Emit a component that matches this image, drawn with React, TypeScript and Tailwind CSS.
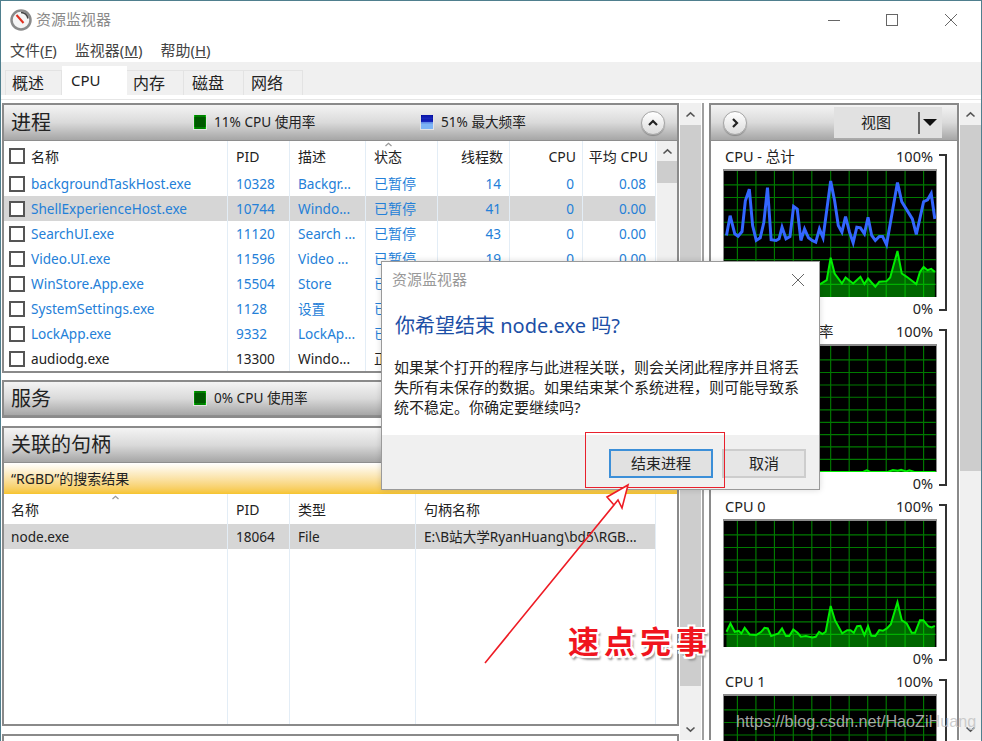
import type { ReactNode } from 'react'

const blueLine = [[135,705],[146,645],[160,700],[170,707],[182,693],[192,600],[204,565],[214,675],[225,720],[237,712],[248,665],[259,560],[270,718],[285,720],[294,715],[303,680],[315,715],[327,708],[338,617],[349,625],[360,720],[371,685],[383,712],[394,720],[405,725],[416,685],[427,712],[450,540],[462,600],[473,675],[484,695],[495,648],[507,695],[518,727],[529,680],[540,682],[552,700],[563,650],[574,705],[585,720],[597,708],[607,708],[619,733],[652,545],[665,603],[697,655],[709,702],[731,603],[743,597],[754,578],[765,655]]
const totalGreen = [[128,850],[300,850],[417,853],[438,840],[450,772],[462,820],[484,850],[495,832],[518,850],[540,830],[552,852],[563,835],[585,860],[597,845],[619,843],[630,832],[652,752],[665,820],[680,830],[709,852],[720,815],[731,800],[743,810],[754,806],[765,815]]
const serviceGreen = [[0,381],[420,381],[431,376],[442,381],[495,381],[510,375],[525,377],[535,374],[550,379],[560,376],[575,381],[640,381]]
const cpu0Green = [[75,455],[87,430],[100,455],[112,452],[120,460],[130,443],[145,463],[165,465],[180,455],[190,443],[200,445],[210,468],[232,460],[243,445],[255,468],[265,468],[277,448],[290,458],[300,470],[315,468],[335,472],[345,470],[355,455],[365,462],[375,455],[390,377],[403,420],[425,460],[440,450],[450,450],[460,458],[470,438],[480,437],[492,465],[503,438],[513,467],[525,468],[537,450],[548,452],[560,445],[572,432],[592,365],[605,420],[620,430],[635,458],[645,458],[660,420],[670,420],[685,438],[695,442],[705,437]]

const processes = [
  ['backgroundTaskHost.exe', '10328', 'Backgr...', '已暂停', '14', '0', '0.08'],
  ['ShellExperienceHost.exe', '10744', 'Windo...', '已暂停', '41', '0', '0.00'],
  ['SearchUI.exe', '11120', 'Search ...', '已暂停', '43', '0', '0.00'],
  ['Video.UI.exe', '11596', 'Video ...', '已暂停', '19', '0', '0.00'],
  ['WinStore.App.exe', '15504', 'Store', '已暂停', '', '', ''],
  ['SystemSettings.exe', '1128', '设置', '已暂停', '', '', ''],
  ['LockApp.exe', '9332', 'LockAp...', '已暂停', '', '', ''],
  ['audiodg.exe', '13300', 'Windo...', '正在运行', '', '', ''],
]

const charts = [
  { label: 'CPU - 总计', ox: 128, oy: 510, blue: blueLine, green: totalGreen },
  { label: '服务 CPU 使用率', ox: 0, oy: 0, blue: null, green: serviceGreen },
  { label: 'CPU 0', ox: 68, oy: 120, blue: null, green: cpu0Green },
  { label: 'CPU 1', ox: 0, oy: 0, blue: null, green: [[0,381],[640,381]] },
]

function Chevron({ up = true, className = '' }: { up?: boolean; className?: string }) {
  return (
    <svg width="11" height="7" viewBox="0 0 11 7" className={className}>
      <path d={up ? 'M1.5 5.5 5.5 1.8l4 3.7' : 'M1.5 1.5l4 3.7 4-3.7'} fill="none" stroke="#555" strokeWidth="1.6" />
    </svg>
  )
}

function Meter({ blue = false }: { blue?: boolean }) {
  const cells = [3, 5, 7, 9, 11]
  return (
    <svg width="14" height="16" viewBox="0 0 14 16" className="shrink-0">
      <rect width="14" height="16" fill="#e4e4e4" />
      {blue ? (
        <>
          <rect x="1" y="1" width="12" height="14" fill="#7db4f5" />
          <rect x="1" y="1" width="12" height="7" fill="#000a9c" />
          {cells.map((c) => <path key={c} d={`M${c} 1v7M1 ${c / 1.4 + 1}h12`} stroke="#2a3cd0" strokeWidth=".5" />)}
        </>
      ) : (
        <>
          <rect x="1" y="1" width="12" height="14" fill="#00c000" />
          {cells.map((c) => <path key={c} d={`M${c} 1v14M1 ${c + 1}h12`} stroke="#002000" strokeWidth=".8" />)}
        </>
      )}
    </svg>
  )
}

function RoundButton({ dir }: { dir: 'up' | 'right' }) {
  return (
    <div className="flex h-[24px] w-[24px] items-center justify-center rounded-full border border-[#a5a5a5] bg-linear-to-b from-white to-[#dcdcdc] shadow-[0_1px_1px_rgba(0,0,0,0.25)]">
      <svg width="12" height="12" viewBox="0 0 12 12">
        <path d={dir === 'up' ? 'M2 8l4-4 4 4' : 'M4 2l4 4-4 4'} fill="none" stroke="#222" strokeWidth="2.2" />
      </svg>
    </div>
  )
}

function SectionHeader({ title, children, height }: { title: string; children?: ReactNode; height: string }) {
  return (
    <div className={`flex shrink-0 items-center border-b border-[#8e8e8e] bg-linear-to-b from-[#f4f4f4] via-[#dadada] to-[#a6a6a6] ${height}`}>
      <div className="w-[189px] shrink-0 pl-[7px] text-[20px] leading-none text-[#222]">{title}</div>
      {children}
    </div>
  )
}

function Stat({ text, blue, width }: { text: string; blue?: boolean; width: string }) {
  return (
    <div className={`flex items-center gap-[7px] text-[13.6px] text-[#222] ${width}`}>
      <Meter blue={blue} />
      <span>{text}</span>
    </div>
  )
}

function Check() {
  return <span className="h-[16px] w-[16px] shrink-0 border-2 border-[#555] bg-white" />
}

function ScrollTrack({ thumbEnd, className = '' }: { thumbEnd: string; className?: string }) {
  return (
    <div className={`flex flex-col bg-[#f0f0f0] ${className}`}>
      <div className="flex h-[22px] shrink-0 items-center justify-center">
        <Chevron />
      </div>
      <div className={`bg-[#cdcdcd] ${thumbEnd}`} />
      <div className="flex-1" />
      <div className="flex h-[22px] shrink-0 items-center justify-center">
        <Chevron up={false} />
      </div>
    </div>
  )
}

const cell = 'flex h-full shrink-0 items-center border-r border-[#e3edf6] whitespace-nowrap overflow-hidden'
const rowCell = `${cell} pt-[2px]`

function ProcessTable() {
  return (
    <div className="flex">
      <div className="w-[652px] shrink-0">
        <div className="flex h-[30px] text-[14px] text-[#222]">
          <div className={`${cell} w-[224px] gap-[6px] pl-[5px]`}><Check />名称</div>
          <div className={`${cell} w-[62px] pl-[8px]`}>PID</div>
          <div className={`${cell} w-[76px] pl-[8px]`}>描述</div>
          <div className={`${cell} relative w-[72px] pl-[8px]`}>
            状态
            <Chevron className="absolute left-[17px] top-0 scale-75 opacity-60" />
          </div>
          <div className={`${cell} w-[72px] justify-end pr-[6px]`}>线程数</div>
          <div className={`${cell} w-[73px] justify-end pr-[6px]`}>CPU</div>
          <div className={`${cell} w-[73px] justify-end pr-[7px]`}>平均 CPU</div>
        </div>
        {processes.map((p, i) => (
          <div key={p[0]} className={`flex h-[25px] text-[13.6px] ${i === 7 ? 'text-[#222]' : 'text-[#2480d8]'} ${i === 1 ? 'bg-[#d6d6d6]' : ''}`}>
            <div className={`${cell} w-[224px] gap-[6px] pl-[5px]`}><Check /><span className="pt-[2px]">{p[0]}</span></div>
            <div className={`${rowCell} w-[62px] pl-[8px]`}>{p[1]}</div>
            <div className={`${rowCell} w-[76px] pl-[8px]`}>{p[2]}</div>
            <div className={`${cell} w-[72px] pl-[8px] text-[14px]`}>{p[3]}</div>
            <div className={`${rowCell} w-[72px] justify-end pr-[8px]`}>{p[4]}</div>
            <div className={`${rowCell} w-[73px] justify-end pr-[8px]`}>{p[5]}</div>
            <div className={`${rowCell} w-[73px] justify-end pr-[9px]`}>{p[6]}</div>
          </div>
        ))}
      </div>
      <div className="ml-[1px] flex h-[230px] w-[20px] flex-col bg-[#f0f0f0]">
        <div className="flex h-[20px] shrink-0 items-center justify-center"><Chevron /></div>
        <div className="h-[22px] bg-[#cdcdcd]" />
      </div>
    </div>
  )
}

function HandleTable() {
  const columns = ['w-[224px] pl-[7px]', 'w-[62px] pl-[8px]', 'w-[126px] pl-[8px]', 'w-[240px] pl-[8px]']
  const head = ['名称', 'PID', '类型', '句柄名称']
  const row = ['node.exe', '18064', 'File', 'E:\\B站大学RyanHuang\\bd5\\RGB...']
  return (
    <div className="relative flex min-h-0 flex-1 flex-col">
      <div className="flex h-[30px] shrink-0 text-[14px] text-[#222]">
        {head.map((h, i) => <div key={h} className={`${cell} ${columns[i]}`}>{h}</div>)}
      </div>
      <Chevron className="absolute left-[106px] top-0 scale-75 opacity-60" />
      <div className="flex h-[25px] w-[652px] shrink-0 bg-[#d6d6d6] text-[13.6px] text-[#222]">
        {row.map((r, i) => <div key={r} className={`${rowCell} ${columns[i]}`}>{r}</div>)}
      </div>
      <div className="flex flex-1">
        {columns.map((c) => <div key={c} className={`${cell} ${c}`} />)}
      </div>
    </div>
  )
}

function Graph({ ox, oy, blue, green }: { ox: number; oy: number; blue: number[][] | null; green: number[][] }) {
  const verticals = [40, 96, 152, 209, 265, 322, 378, 434, 490, 547, 603]
  const horizontals = [42, 80, 118, 155, 193, 231, 268, 305, 343]
  const line = (pts: number[][]) => pts.map((p) => `${p[0] - ox},${p[1] - oy}`).join(' ')
  const first = green[0][0] - ox
  const last = green[green.length - 1][0] - ox
  return (
    <div className="h-[128px] w-[214px] border-t-2 border-r border-l border-[#8c8c8c] bg-black">
      <svg width="212" height="126" viewBox="0 0 640 381" className="block">
        {verticals.map((v) => <line key={v} x1={v} x2={v} y1="0" y2="381" stroke="#007a00" strokeWidth="3.5" />)}
        {horizontals.map((h) => <line key={h} x1="0" x2="640" y1={h} y2={h} stroke="#007a00" strokeWidth="3.5" />)}
        <polygon points={`${first},381 ${line(green)} ${last},381`} fill="rgba(0,255,0,0.4)" />
        <polyline points={line(green)} fill="none" stroke="#00ee00" strokeWidth="6" />
        {blue && <polyline points={line(blue)} fill="none" stroke="#3366ff" strokeWidth="9" />}
      </svg>
    </div>
  )
}

function WindowButtons() {
  return (
    <svg width="140" height="20" viewBox="0 0 140 20" className="absolute right-[14px] top-[10px]">
      <path d="M1 9.5h12" stroke="#666" />
      <rect x="59.5" y="3.5" width="11" height="11" fill="none" stroke="#666" />
      <path d="M118 3l12 12M130 3l-12 12" stroke="#666" />
    </svg>
  )
}

export default function App() {
  return (
    <div className="relative h-[741px] w-[982px] overflow-hidden border-t border-r border-l border-t-[#4f7f8e] border-r-[#4f7f8e] border-l-[#4f7f8e] bg-white font-['Noto_Sans','Noto_Sans_CJK_SC',sans-serif]">
      <div className="relative flex h-[37px] items-center gap-[4px] pl-[9px]">
        <svg width="22" height="22" viewBox="0 0 22 22">
          <circle cx="11" cy="11" r="9.5" fill="#f5f5f5" stroke="#8a8a8a" strokeWidth="2.5" />
          <path d="M6.5 6l7 8" stroke="#e03020" strokeWidth="2" />
          <path d="M11 3.5a7.5 7.5 0 0 1 7 6" fill="none" stroke="#444" strokeWidth="1.5" />
        </svg>
        <span className="text-[15px] text-[#8a8a8a]">资源监视器</span>
        <WindowButtons />
      </div>

      <div className="flex h-[24px] items-center gap-[18px] pl-[9px] text-[15px] text-[#444]">
        <span>文件(<u>F</u>)</span>
        <span>监视器(<u>M</u>)</span>
        <span>帮助(<u>H</u>)</span>
      </div>

      <div className="flex h-[33px] items-end bg-[#f0f0f0] pl-[4px] text-[16px] text-[#222]">
        <div className="flex h-[25px] w-[57px] items-center border border-b-0 border-[#e3e3e3] pl-[6px]">概述</div>
        <div className="flex h-[29px] w-[65px] items-center bg-white pl-[9px] text-[15px]">CPU</div>
        <div className="flex h-[25px] w-[57px] items-center border border-b-0 border-l-0 border-[#e3e3e3] pl-[6px]">内存</div>
        <div className="flex h-[25px] w-[60px] items-center border border-b-0 border-l-0 border-[#e3e3e3] pl-[8px]">磁盘</div>
        <div className="flex h-[25px] w-[59px] items-center border border-b-0 border-l-0 border-[#e3e3e3] pl-[7px]">网络</div>
      </div>

      <div className="h-[5px] border-b border-[#e6e6e6]" />

      <div className="flex h-[640px] pt-[3px]">
        <div className="ml-[1px] flex w-[677px] shrink-0 flex-col">
          <section className="h-[270px] shrink-0 border-2 border-[#8a8a8a]">
            <SectionHeader title="进程" height="h-[36px]">
              <Stat text="11% CPU 使用率" width="w-[227px]" />
              <Stat text="51% 最大频率" blue width="w-[221px]" />
              <RoundButton dir="up" />
            </SectionHeader>
            <ProcessTable />
          </section>
          <section className="mt-[7px] h-[38px] shrink-0 border-2 border-[#8a8a8a]">
            <SectionHeader title="服务" height="h-[34px]">
              <Stat text="0% CPU 使用率" width="w-[227px]" />
            </SectionHeader>
          </section>
          <section className="mt-[8px] flex h-[300px] shrink-0 flex-col border-2 border-[#8a8a8a]">
            <SectionHeader title="关联的句柄" height="h-[35px]" />
            <div className="flex h-[31px] shrink-0 items-center bg-linear-to-b from-white to-[#f6c42c] pl-[7px] text-[14px] text-[#222]">
              “RGBD”的搜索结果
            </div>
            <HandleTable />
          </section>
          <section className="mt-[8px] h-[20px] shrink-0 border-2 border-[#8a8a8a]" />
        </div>

        <ScrollTrack thumbEnd="h-[561px]" className="ml-[1px] h-[637px] w-[21px] shrink-0" />
        <div className="ml-[1px] h-full w-[2px] shrink-0 bg-[#a0a0a0]" />

        <div className="ml-[5px] h-full w-[250px] shrink-0 border-2 border-b-0 border-[#8a8a8a]">
          <div className="flex h-[36px] items-center justify-between border-b border-[#8e8e8e] bg-linear-to-b from-[#f4f4f4] via-[#dadada] to-[#a6a6a6] pr-[15px] pl-[12px]">
            <RoundButton dir="right" />
            <div className="flex h-[31px] w-[108px] items-center bg-[#e1e1e1] text-[15px] text-[#222]">
              <span className="flex-1 text-center">视图</span>
              <span className="h-[22px] w-[2px] bg-[#666]" />
              <svg width="22" height="8" viewBox="0 0 22 8"><path d="M3 0h14l-7 7z" fill="#111" /></svg>
            </div>
          </div>
          <div className="flex flex-col pl-[12px]">
            {charts.map((c) => (
              <div key={c.label} className="flex h-[175px] shrink-0">
                <div className="w-[214px] shrink-0 text-[14.5px] text-[#222]">
                  <div className="flex h-[28px] items-end justify-between pr-[4px] pb-[1px] pl-[2px]">
                    <span>{c.label}</span>
                    <span>100%</span>
                  </div>
                  <Graph ox={c.ox} oy={c.oy} blue={c.blue} green={c.green} />
                  <div className="flex h-[23px] items-end justify-end pr-[4px]">0%</div>
                </div>
                <div className="mt-[13px] ml-[2px] h-[157px] w-[8px] border-t-2 border-r-2 border-b-2 border-[#333]" />
              </div>
            ))}
          </div>
        </div>

        <ScrollTrack thumbEnd="h-[346px]" className="ml-[1px] h-full w-[21px] shrink-0" />
      </div>

      {/* dialog */}
      <div className="absolute top-[260px] left-[380px] flex h-[229px] w-[439px] flex-col border border-[#9a9a9a] bg-white shadow-[0_0_6px_rgba(0,0,0,0.15)]">
        <div className="relative h-[49px] shrink-0 pt-[6px] pl-[10px] text-[15px] text-[#999]">
          资源监视器
          <svg width="14" height="14" viewBox="0 0 14 14" className="absolute top-[11px] right-[14px]">
            <path d="M1 1l12 12M13 1 1 13" stroke="#666" />
          </svg>
        </div>
        <div className="pl-[13px] text-[20px] leading-[30px] text-[#1c4fa6]">你希望结束 node.exe 吗?</div>
        <p className="mt-[16px] w-[420px] pl-[12px] text-[15px] leading-[20px] text-[#222]">
          如果某个打开的程序与此进程关联，则会关闭此程序并且将丢失所有未保存的数据。如果结束某个系统进程，则可能导致系统不稳定。你确定要继续吗?
        </p>
        <div className="mt-auto flex h-[54px] items-center justify-end gap-[9px] bg-[#f0f0f0] pr-[13px] pt-[2px] text-[15px] text-[#222]">
          <button className="h-[29px] w-[104px] border-2 border-[#3c8fd8] bg-[#e1e1e1]">结束进程</button>
          <button className="h-[29px] w-[84px] border-2 border-[#cdcdcd] bg-[#e6e6e6]">取消</button>
        </div>
      </div>

      {/* annotation */}
      <div className="absolute top-[431px] left-[584px] h-[56px] w-[140px] border border-[#e8202c]" />
      <svg width="982" height="741" viewBox="0 0 982 741" className="pointer-events-none absolute top-[-1px] left-[-1px]">
        <polygon points="485,663 614,505 607,497 628,485 622,508 618,500" fill="#fff" stroke="#ee1c25" strokeWidth="1.6" />
      </svg>
      <div className="absolute top-[620px] left-[567px] text-[31px] leading-[40px] font-bold tracking-[5px] text-[#f0141e] [text-shadow:1px_1px_0_#fff,-1px_-1px_0_#fff,1px_-1px_0_#fff,-1px_1px_0_#fff,2px_2px_0_#fff,-2px_-2px_0_#fff,2px_-2px_0_#fff,-2px_2px_0_#fff,3px_4px_2px_#999]">
        速点完事
      </div>
      <div className="absolute top-[708px] left-[735px] font-['Liberation_Sans',sans-serif] text-[16.2px] text-[#c4c4c4]/85">
        https://blog.csdn.net/HaoZiHuang
      </div>
    </div>
  )
}
